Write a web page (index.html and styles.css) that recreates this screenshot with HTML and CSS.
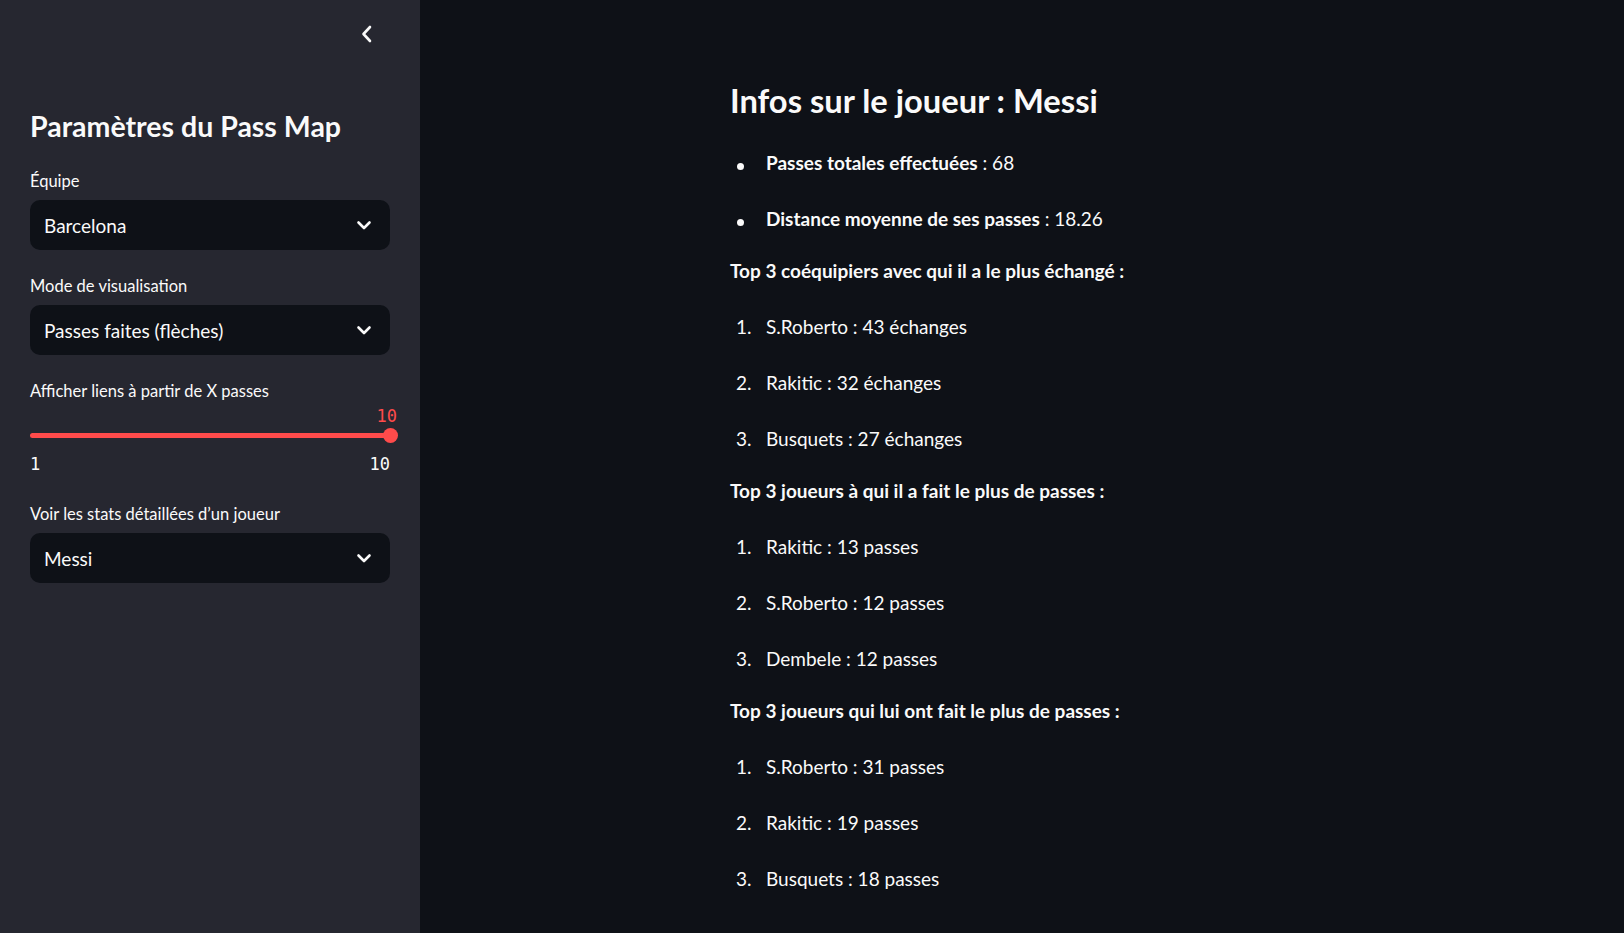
FILE: index.html
```html
<!DOCTYPE html>
<html lang="fr">
<head>
<meta charset="utf-8">
<title>Pass Map</title>
<link rel="stylesheet" href="styles.css">
</head>
<body>
<div class="app">
  <aside class="sidebar">
    <div class="sidebar-head">
      <svg class="collapse" width="24" height="24" viewBox="0 0 24 24"><path d="M15 5 L8.5 12 L15 19" fill="none" stroke="#fafafa" stroke-width="2.6" stroke-linecap="round" stroke-linejoin="round"/></svg>
    </div>
    <h2 class="side-title">Paramètres du Pass Map</h2>
    <div class="label">Équipe</div>
    <div class="select"><span>Barcelona</span><svg width="20" height="20" viewBox="0 0 20 20"><path d="M4.5 7.5 L10 13 L15.5 7.5" fill="none" stroke="#fafafa" stroke-width="2.6" stroke-linecap="round" stroke-linejoin="round"/></svg></div>
    <div class="label">Mode de visualisation</div>
    <div class="select"><span>Passes faites (flèches)</span><svg width="20" height="20" viewBox="0 0 20 20"><path d="M4.5 7.5 L10 13 L15.5 7.5" fill="none" stroke="#fafafa" stroke-width="2.6" stroke-linecap="round" stroke-linejoin="round"/></svg></div>
    <div class="label">Afficher liens à partir de X passes</div>
    <div class="slider">
      <div class="slider-value">10</div>
      <div class="slider-rail"><div class="slider-track"></div><div class="slider-thumb"></div></div>
      <div class="slider-minmax"><span>1</span><span>10</span></div>
    </div>
    <div class="label">Voir les stats détaillées d’un joueur</div>
    <div class="select"><span>Messi</span><svg width="20" height="20" viewBox="0 0 20 20"><path d="M4.5 7.5 L10 13 L15.5 7.5" fill="none" stroke="#fafafa" stroke-width="2.6" stroke-linecap="round" stroke-linejoin="round"/></svg></div>
  </aside>
  <main class="main">
    <div class="content">
      <h3 class="main-title">Infos sur le joueur : Messi</h3>
      <ul class="bullets">
        <li><span><b>Passes totales effectuées</b> : 68</span></li>
        <li><span><b>Distance moyenne de ses passes</b> : 18.26</span></li>
      </ul>
      <p class="section"><b>Top 3 coéquipiers avec qui il a le plus échangé :</b></p>
      <ol class="numbers">
        <li><span>S.Roberto : 43 échanges</span></li>
        <li><span>Rakitic : 32 échanges</span></li>
        <li><span>Busquets : 27 échanges</span></li>
      </ol>
      <p class="section"><b>Top 3 joueurs à qui il a fait le plus de passes :</b></p>
      <ol class="numbers">
        <li><span>Rakitic : 13 passes</span></li>
        <li><span>S.Roberto : 12 passes</span></li>
        <li><span>Dembele : 12 passes</span></li>
      </ol>
      <p class="section"><b>Top 3 joueurs qui lui ont fait le plus de passes :</b></p>
      <ol class="numbers">
        <li><span>S.Roberto : 31 passes</span></li>
        <li><span>Rakitic : 19 passes</span></li>
        <li><span>Busquets : 18 passes</span></li>
      </ol>
    </div>
  </main>
</div>
</body>
</html>
```
FILE: styles.css
```css
* { box-sizing: border-box; }
html, body { margin: 0; height: 100%; }
body {
  background: #0e1117;
  color: #fafafa;
  font-family: Lato, "Noto Sans", sans-serif;
  overflow: hidden;
}
.app { display: flex; height: 100vh; }
.sidebar {
  width: 420px;
  flex: none;
  background: #262730;
  padding: 0 30px;
}
.sidebar-head {
  height: 68px;
  display: flex;
  justify-content: flex-end;
  align-items: center;
}
.collapse { margin-right: 11px; }
.side-title {
  margin: 40px 0 0;
  font-size: 28.5px;
  line-height: 37px;
  font-weight: 700;
}
.label {
  font-size: 16.5px;
  line-height: 24px;
  margin: 24px 0 7px;
}
.select {
  height: 50px;
  background: #0e1117;
  border-radius: 10px;
  display: flex;
  align-items: center;
  justify-content: space-between;
  padding: 0 16px 0 14px;
  font-size: 19px;
}
.select svg { display: block; }
.slider { margin: -4px 0 28px; }
.slider-value {
  font-family: "DejaVu Sans Mono", monospace;
  font-size: 17px;
  line-height: 20px;
  color: #ff4b4b;
  text-align: right;
  margin-right: -7px;
}
.slider-rail {
  position: relative;
  height: 15px;
  margin-top: 2px;
  display: flex;
  align-items: center;
}
.slider-track {
  height: 5px;
  width: 100%;
  background: #ff4b4b;
  border-radius: 3px;
}
.slider-thumb {
  position: absolute;
  right: -7.5px;
  top: 0;
  width: 15px;
  height: 15px;
  border-radius: 50%;
  background: #ff4b4b;
}
.slider-minmax {
  display: flex;
  justify-content: space-between;
  margin-top: 11px;
  font-family: "DejaVu Sans Mono", monospace;
  font-size: 17px;
  line-height: 20px;
}
.main { flex: 1; padding-top: 77px; }
.content { width: 584px; margin: 0 auto; }
.main-title {
  margin: 0;
  font-size: 32.7px;
  line-height: 48px;
  font-weight: 700;
}
.bullets, .numbers {
  list-style: none;
  margin: 0;
  padding: 0;
  font-size: 19px;
}
.bullets { margin-top: 10px; }
.numbers { counter-reset: n; }
.bullets li, .numbers li {
  display: flex;
  align-items: baseline;
  line-height: 32px;
  padding: 12px 0;
}
.bullets li::before {
  content: "";
  width: 7px;
  height: 7px;
  border-radius: 50%;
  background: #fafafa;
  margin: 0 22px 3.5px 7px;
}
.numbers li { counter-increment: n; }
.numbers li::before {
  content: counter(n) ".";
  box-sizing: border-box;
  width: 36px;
  padding-left: 6px;
  flex: none;
}
b { font-weight: 700; }
.section {
  margin: 8px 0 12px;
  font-size: 19px;
  line-height: 32px;
}
```
